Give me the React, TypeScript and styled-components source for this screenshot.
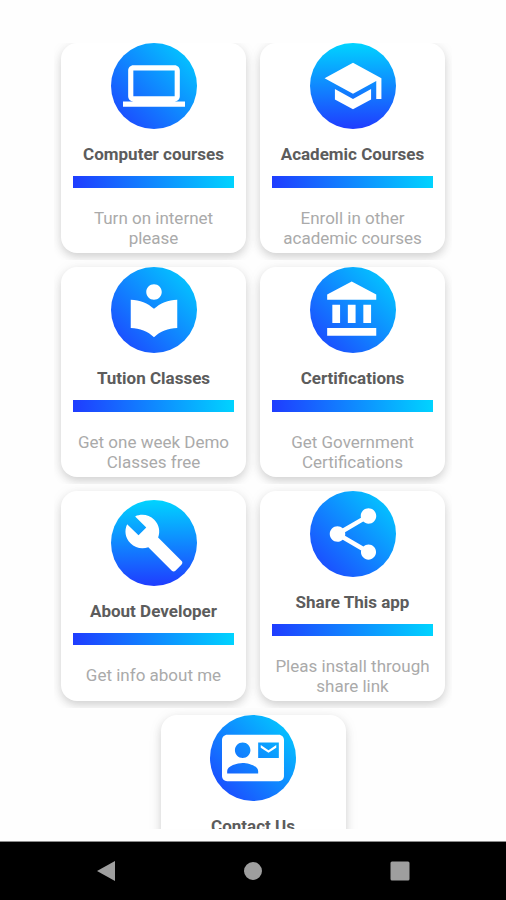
import React from "react";
import styled, { createGlobalStyle } from "styled-components";
import {
  MdContactMail,
  MdLocalLibrary,
  MdSchool,
  MdShare,
} from "react-icons/md";

const GlobalStyle = createGlobalStyle`
  * { box-sizing: border-box; }
  body { margin: 0; background: #fefefe; font-family: Roboto, sans-serif; }
  button { font: inherit; }
`;

const Screen = styled.div`
  display: flex;
  flex-direction: column;
  height: 100vh;
`;

const Scroller = styled.main`
  flex: 1;
  min-height: 0;
  margin: 43px 0 12px;
  overflow-y: auto;
  scrollbar-width: none;
`;

const CardRow = styled.section<{ $first?: boolean }>`
  display: flex;
  justify-content: center;
  gap: 14px;
  margin: 0 54px;
  padding: ${(p) => (p.$first ? "0 7px 7px" : "7px")};
  overflow: hidden;
`;

const Card = styled.button`
  display: flex;
  flex-direction: column;
  width: calc(50% - 7px);
  height: 210px;
  padding: 0 12px;
  border: 0;
  border-radius: 16px;
  background: #fff;
  box-shadow: 0 4px 8px rgba(0, 0, 0, 0.14), 0 2px 16px rgba(0, 0, 0, 0.06);
  cursor: pointer;
`;

const CardBody = styled.span<{ $top?: boolean }>`
  display: flex;
  flex-direction: column;
  align-items: center;
  width: 100%;
  margin: ${(p) => (p.$top ? "0" : "auto 0")};
  padding-bottom: 8px;
`;

const Badge = styled.span<{ $vertical?: boolean }>`
  display: flex;
  align-items: center;
  justify-content: center;
  flex: none;
  width: 86px;
  height: 86px;
  border-radius: 50%;
  color: #fff;
  background: linear-gradient(${(p) => (p.$vertical ? "0deg" : "45deg")}, #1f3cff, #00d4ff);

  svg {
    width: 62px;
    height: 62px;
    fill: currentColor;
  }
`;

const Title = styled.span`
  margin-top: 15px;
  color: #5c5c5c;
  font-size: 17px;
  font-weight: 700;
  line-height: 20px;
  white-space: nowrap;
`;

const Bar = styled.span`
  width: 100%;
  height: 12px;
  margin-top: 12px;
  background: linear-gradient(86deg, #1f3cff, #00d4ff);
`;

const Description = styled.span`
  margin-top: 20px;
  color: #aaa;
  font-size: 17px;
  line-height: 20px;
  text-align: center;
`;

const NavBar = styled.nav`
  display: flex;
  align-items: center;
  justify-content: space-between;
  height: 59px;
  padding: 0 92px;
  border-top: 1px solid #8c8c8c;
  background: #000;
`;

const NavButton = styled.button`
  display: flex;
  align-items: center;
  justify-content: center;
  width: 28px;
  height: 28px;
  padding: 0;
  border: 0;
  background: none;
  color: #9e9e9e;

  svg {
    width: 24px;
    height: 24px;
    fill: currentColor;
  }
`;

const Glyph = ({ d }: { d: string }) => (
  <svg viewBox="0 0 24 24" aria-hidden="true">
    <path d={d} />
  </svg>
);

const laptop =
  "M20 18c1.1 0 1.99-.9 1.99-2L22 6c0-1.1-.9-2-2-2H4c-1.1 0-2 .9-2 2v10c0 1.1.9 2 2 2H0v2h24v-2h-4zM4 6h16v10H4V6z";
const bank =
  "M4 10v7h3v-7H4zm6 0v7h3v-7h-3zM2 22h19v-3H2v3zm14-12v7h3v-7h-3zm-4.5-9L2 6v2h19V6l-9.500-5z";
const wrench =
  "M22.7 19l-9.1-9.1c.9-2.3.4-5-1.5-6.9-2-2-5-2.4-7.4-1.3L9 6 6 9 1.6 4.7C.4 7.1.9 10.1 2.9 12.1c1.9 1.9 4.6 2.4 6.9 1.5l9.1 9.1c.4.4 1 .4 1.4 0l2.3-2.3c.5-.4.5-1.1.1-1.4z";

type Item = {
  title: string;
  text?: string;
  icon: React.ReactNode;
  vertical?: boolean;
};

const rows: Item[][] = [
  [
    { title: "Computer courses", text: "Turn on internet please", icon: <Glyph d={laptop} /> },
    { title: "Academic Courses", text: "Enroll in other academic courses", icon: <MdSchool />, vertical: true },
  ],
  [
    { title: "Tution Classes", text: "Get one week Demo Classes free", icon: <MdLocalLibrary /> },
    { title: "Certifications", text: "Get Government Certifications", icon: <Glyph d={bank} /> },
  ],
  [
    { title: "About Developer", text: "Get info about me", icon: <Glyph d={wrench} />, vertical: true },
    { title: "Share This app", text: "Pleas install through share link", icon: <MdShare /> },
  ],
  [{ title: "Contact Us", icon: <MdContactMail /> }],
];

export default function App() {
  return (
    <Screen>
      <GlobalStyle />
      <Scroller>
        {rows.map((row, index) => (
          <CardRow key={row[0].title} $first={index === 0}>
            {row.map((item) => (
              <Card key={item.title} type="button">
                <CardBody $top={!item.text}>
                  <Badge $vertical={item.vertical}>{item.icon}</Badge>
                  <Title>{item.title}</Title>
                  <Bar />
                  {item.text && <Description>{item.text}</Description>}
                </CardBody>
              </Card>
            ))}
          </CardRow>
        ))}
      </Scroller>
      <NavBar aria-label="System navigation">
        <NavButton type="button" aria-label="Back">
          <Glyph d="M21 2v20L3 12z" />
        </NavButton>
        <NavButton type="button" aria-label="Home">
          <Glyph d="M12 3a9 9 0 1 0 0 18 9 9 0 0 0 0-18z" />
        </NavButton>
        <NavButton type="button" aria-label="Recent apps">
          <Glyph d="M4 2.500h16q1.500 0 1.500 1.500v16q0 1.500-1.500 1.500H4q-1.500 0-1.500-1.500V4q0-1.500 1.500-1.500z" />
        </NavButton>
      </NavBar>
    </Screen>
  );
}
